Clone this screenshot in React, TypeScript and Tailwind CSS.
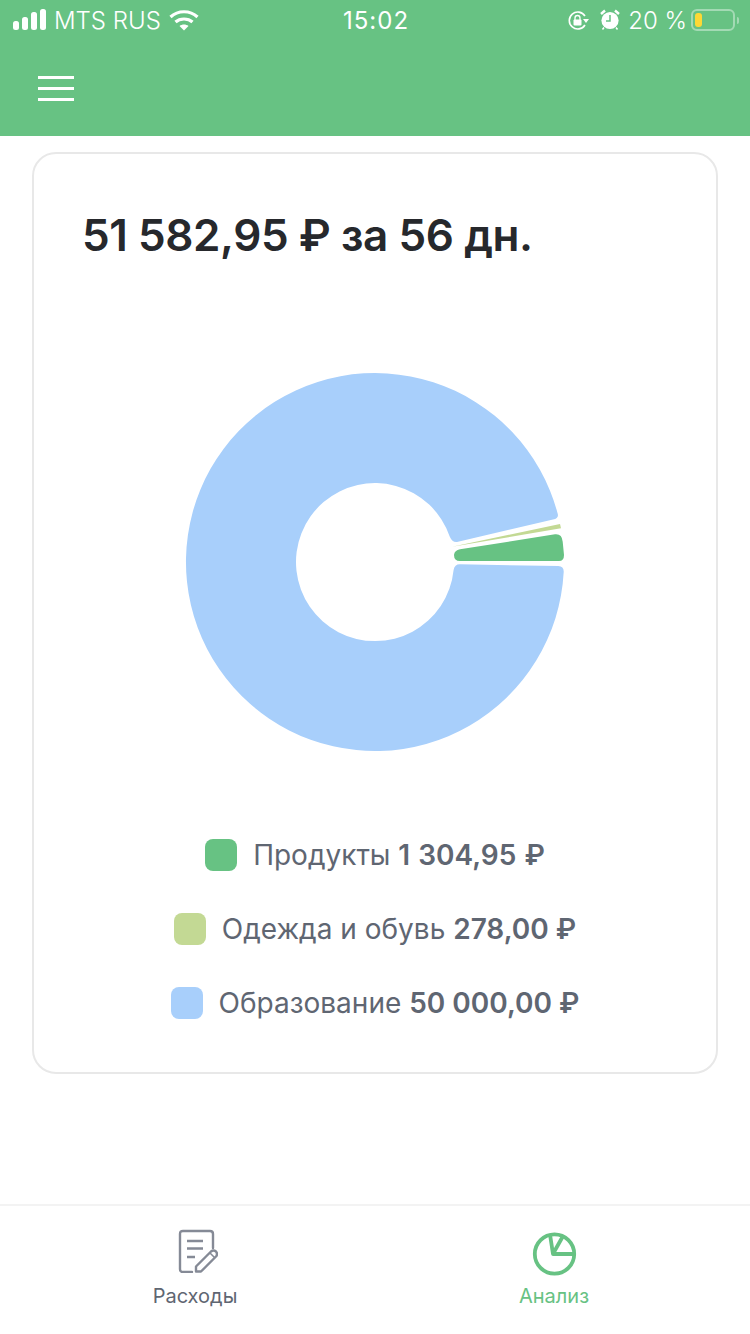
import React from "react";

const legend = [
  { name: "Продукты", value: "1 304,95 ₽", swatch: "bg-[#67c283]", valueClass: "[word-spacing:1px]" },
  { name: "Одежда и обувь", value: "278,00 ₽", swatch: "bg-[#c3d994]", valueClass: "" },
  { name: "Образование", value: "50 000,00 ₽", swatch: "bg-[#a8cffb]", valueClass: "" },
];

const StatusBar = () => (
  <div className="grid h-[40px] grid-cols-3 items-center pl-[13px] pr-[11px] text-[24px] font-light leading-none text-white">
    <div className="flex items-center">
      <svg width="34" height="22" viewBox="0 0 34 22" fill="#fff">
        <rect x="0" y="12" width="6" height="9" rx="2.5" />
        <rect x="9" y="8" width="6" height="13" rx="2.5" />
        <rect x="18" y="3" width="6" height="18" rx="2.5" />
        <rect x="27" y="0" width="6" height="21" rx="2.5" />
      </svg>
      <span className="ml-[7px] mt-[2px] whitespace-nowrap">MTS RUS</span>
      <svg className="ml-[8px]" width="30" height="22" viewBox="0 0 30 22" fill="none" stroke="#fff" strokeWidth="3.2">
        <path d="M1.5 8 C9 1 21 1 28.5 8" />
        <path d="M6.5 13 C11 9 19 9 23.5 13" />
        <path d="M15 21.5 L10.5 17 C13 15 17 15 19.5 17 Z" fill="#fff" stroke="none" />
      </svg>
    </div>
    <div className="mt-[2px] text-center font-normal tracking-[1px]">15:02</div>
    <div className="flex items-center justify-end">
      <svg width="22" height="22" viewBox="0 0 22 22" fill="none">
        <path d="M17 16 A8.5 8.5 0 1 1 17 7" stroke="#fff" strokeWidth="1.6" />
        <path d="M15 10 L21 10 L18 14 Z" fill="#fff" />
        <rect x="5.5" y="10.5" width="8" height="6" rx="1" fill="#fff" />
        <path d="M7 11 V9 A2.5 2.5 0 0 1 12 9 V11" stroke="#fff" strokeWidth="1.3" />
      </svg>
      <svg className="ml-[10px]" width="20" height="22" viewBox="0 0 20 22" fill="none">
        <circle cx="10" cy="11.5" r="8.6" fill="#fff" />
        <path d="M10 6 V12 H6" stroke="#67c283" strokeWidth="1.5" />
        <path d="M1 5 L5 1.5 M19 5 L15 1.5" stroke="#fff" strokeWidth="2.4" />
        <path d="M4 18.5 L2.5 20.5 M16 18.5 L17.5 20.5" stroke="#fff" strokeWidth="1.5" />
      </svg>
      <span className="ml-[8px] mt-[2px] whitespace-nowrap">20 %</span>
      <div className="ml-[4px] flex h-[22px] w-[44px] items-center rounded-[6px] border-2 border-white/40 pl-[2px]">
        <div className="h-[14px] w-[7px] rounded-[3px] bg-[#fdd835]" />
      </div>
      <div className="ml-[2px] h-[7px] w-[2px] rounded-r-sm bg-white/40" />
    </div>
  </div>
);

const DocIcon = () => (
  <svg className="ml-[6px]" width="40" height="44" viewBox="0 0 40 44" fill="none" stroke="#858a96" strokeWidth="2.4" strokeLinecap="round" strokeLinejoin="round">
    <path d="M14 43 H5 Q2 43 2 40 V5 Q2 2 5 2 H32 Q35 2 35 5 V19" />
    <path d="M9 12 H25 M9 19.5 H25 M9 28 H17" strokeLinecap="butt" strokeWidth="2.6" />
    <path d="M18 42.5 V37.5 L33 22.5 Q35.5 20.5 38 22.5 Q40 25 38 27.5 L23 42.5 Z" />
    <path d="M32 24 L36 28" strokeWidth="1.6" />
  </svg>
);

const PieIcon = () => (
  <svg width="46" height="46" viewBox="0 0 46 46" fill="none" stroke="#67c283" strokeWidth="3.8" strokeLinejoin="round">
    <circle cx="23.5" cy="23" r="19.7" />
    <path d="M19 3.5 L22 23 L43 23" />
    <path d="M22.5 22 L32 5" />
  </svg>
);

export default function App() {
  return (
    <div className="flex h-[1334px] w-[750px] flex-col overflow-hidden bg-white font-['Inter',sans-serif]">
      <header className="h-[136px] shrink-0 bg-[#67c283]">
        <StatusBar />
        <div className="ml-[38px] mt-[36px] flex w-[36px] flex-col gap-[8px]">
          <div className="h-[3px] bg-white" />
          <div className="h-[3px] bg-white" />
          <div className="h-[3px] bg-white" />
        </div>
      </header>

      <main className="flex-1 px-[32px] pt-[16px]">
        <div className="h-[922px] rounded-[24px] border-2 border-[#e8e8e8] pt-[55px]">
          <h1 className="pl-[48px] text-[44px] font-semibold leading-[52px] tracking-[-0.43px] text-[#26282c]">
            51 582,95 ₽ за 56 дн.
          </h1>
          <div className="mt-[111px] flex justify-center">
            <svg width="380" height="380" viewBox="185 372 380 380">
              <path
                fill="#a8cffb"
                d="M460 564.3 L558.3 566 Q564 566.2 563.7 572 A189 189 0 1 1 557.5 513 Q559.5 518 553 519.5 L458 541.7 Q452.5 543 449.8 536.7 A79 79 0 1 0 453.6 570 Q454.5 564.2 460 564.3 Z"
              />
              <path
                fill="#67c283"
                d="M454 555 Q454.5 550.3 460 549.3 L555 534.3 Q562 533.5 562.7 541.7 L564 555 Q564 561 559 561 L460 561 Q454 561 454 555 Z"
              />
              <path fill="#c3d994" d="M452 546.7 L560 524 L561 528.3 Z" />
            </svg>
          </div>
          <div className="mt-[87px] flex flex-col items-center gap-[42px]">
            {legend.map((item) => (
              <div key={item.name} className="flex h-[32px] items-center text-[28px] leading-none text-[#5f6672]">
                <div className={`mr-[16px] h-[32px] w-[32px] rounded-[8px] ${item.swatch}`} />
                <span className="whitespace-nowrap">
                  {item.name} <b className={`font-semibold ${item.valueClass}`}>{item.value}</b>
                </span>
              </div>
            ))}
          </div>
        </div>
      </main>

      <footer className="flex h-[130px] shrink-0 border-t-2 border-[#f3f3f3]">
        <div className="flex w-[390px] flex-col items-center pt-[23px]">
          <DocIcon />
          <span className="mt-[11px] text-[20px] leading-[24px] text-[#5f6672]">Расходы</span>
        </div>
        <div className="flex w-[328px] flex-col items-center pt-[25px]">
          <PieIcon />
          <span className="mt-[7px] text-[20px] leading-[24px] text-[#67c283]">Анализ</span>
        </div>
      </footer>
    </div>
  );
}
